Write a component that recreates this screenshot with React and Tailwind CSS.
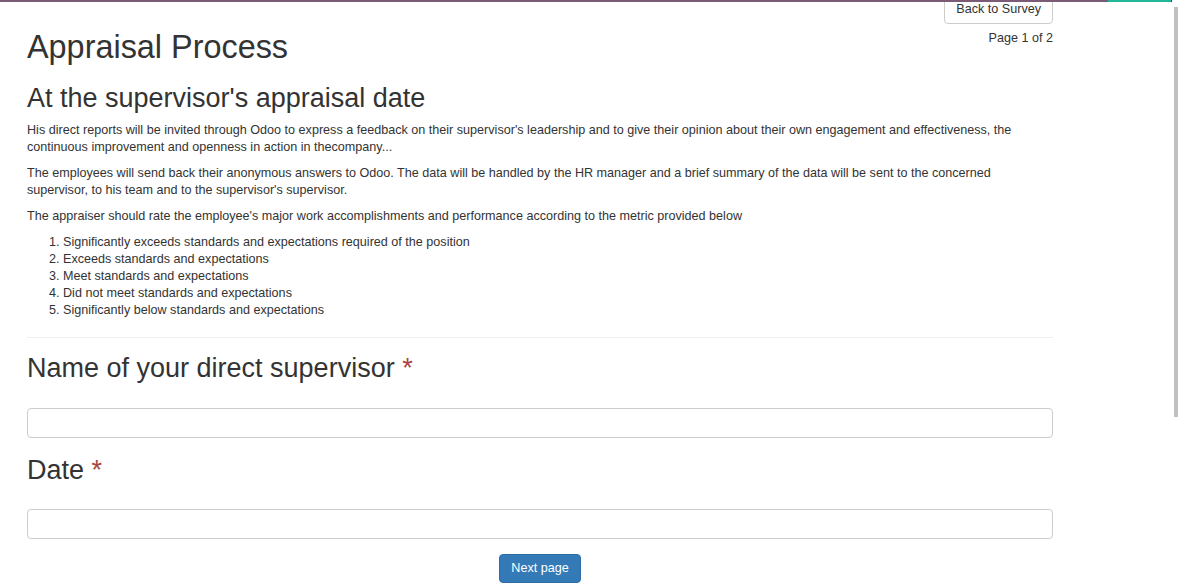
export default function App() {
  const levels = [
    'Significantly exceeds standards and expectations required of the position',
    'Exceeds standards and expectations',
    'Meet standards and expectations',
    'Did not meet standards and expectations',
    'Significantly below standards and expectations',
  ]

  return (
    <div className="flex h-[586px] overflow-hidden bg-white text-[#333] font-['Liberation_Sans',Arial,sans-serif]">
      <div className="flex w-[1172px] flex-col">
        {/* Top bar */}
        <div className="relative z-10 flex h-[2px] shrink-0">
          <div className="flex-1 bg-[#7c5b76]" />
          <div className="w-[63px] bg-[#21b799]" />
          <div className="w-[1px] bg-[#444]" />
        </div>

        <div className="ml-[27px] w-[1026px]">
          {/* Header */}
          <div className="flex items-start justify-between">
            <h1 className="mt-[28px] text-[32.4px] leading-[35px]">Appraisal Process</h1>
            <div className="flex flex-col items-end">
              <button className="-mt-[8px] h-[30px] rounded-[4px] border border-[#ccc] bg-white px-[11px] text-[12.6px] leading-[17px]">
                Back to Survey
              </button>
              <span className="mt-[6px] text-[12.6px] leading-[17px]">Page 1 of 2</span>
            </div>
          </div>

          <h2 className="mt-[19px] text-[27px] leading-[29px]">At the supervisor's appraisal date</h2>

          <div className="mt-[9px] text-[12.6px] leading-[17px]">
            <p className="mb-[9px]">
              His direct reports will be invited through Odoo to express a feedback on their supervisor's leadership and to give their opinion about their own engagement and effectiveness, the continuous improvement and openness in action in thecompany...
            </p>
            <p className="mb-[9px]">
              The employees will send back their anonymous answers to Odoo. The data will be handled by the HR manager and a brief summary of the data will be sent to the concerned supervisor, to his team and to the supervisor's supervisor.
            </p>
            <p className="mb-[9px]">
              The appraiser should rate the employee's major work accomplishments and performance according to the metric provided below
            </p>
            <ol className="list-decimal pl-[36px]">
              {levels.map((l) => (
                <li key={l}>{l}</li>
              ))}
            </ol>
          </div>

          <hr className="mt-[18px] border-t border-[#eee]" />

          {/* Question 1 */}
          <h2 className="mt-[16px] text-[27px] leading-[29px]">
            Name of your direct supervisor <span className="text-[#a94442]">*</span>
          </h2>
          <input className="mt-[25px] block h-[30px] w-full rounded-[4px] border border-[#ccc] bg-white" />

          {/* Question 2 */}
          <h2 className="mt-[18px] text-[27px] leading-[29px]">
            Date <span className="text-[#a94442]">*</span>
          </h2>
          <input className="mt-[24px] block h-[30px] w-full rounded-[4px] border border-[#ccc] bg-white" />

          <div className="mt-[15px] flex justify-center">
            <button className="h-[29px] rounded-[4px] border border-[#2e6da4] bg-[#337ab7] px-[11px] text-[12.6px] leading-[17px] text-white">
              Next page
            </button>
          </div>
        </div>
      </div>

      {/* Scrollbar */}
      <div className="w-[6px] shrink-0">
        <div className="ml-[2px] mt-[7px] h-[410px] w-[4px] bg-[#c1c1c1]" />
      </div>
    </div>
  )
}
